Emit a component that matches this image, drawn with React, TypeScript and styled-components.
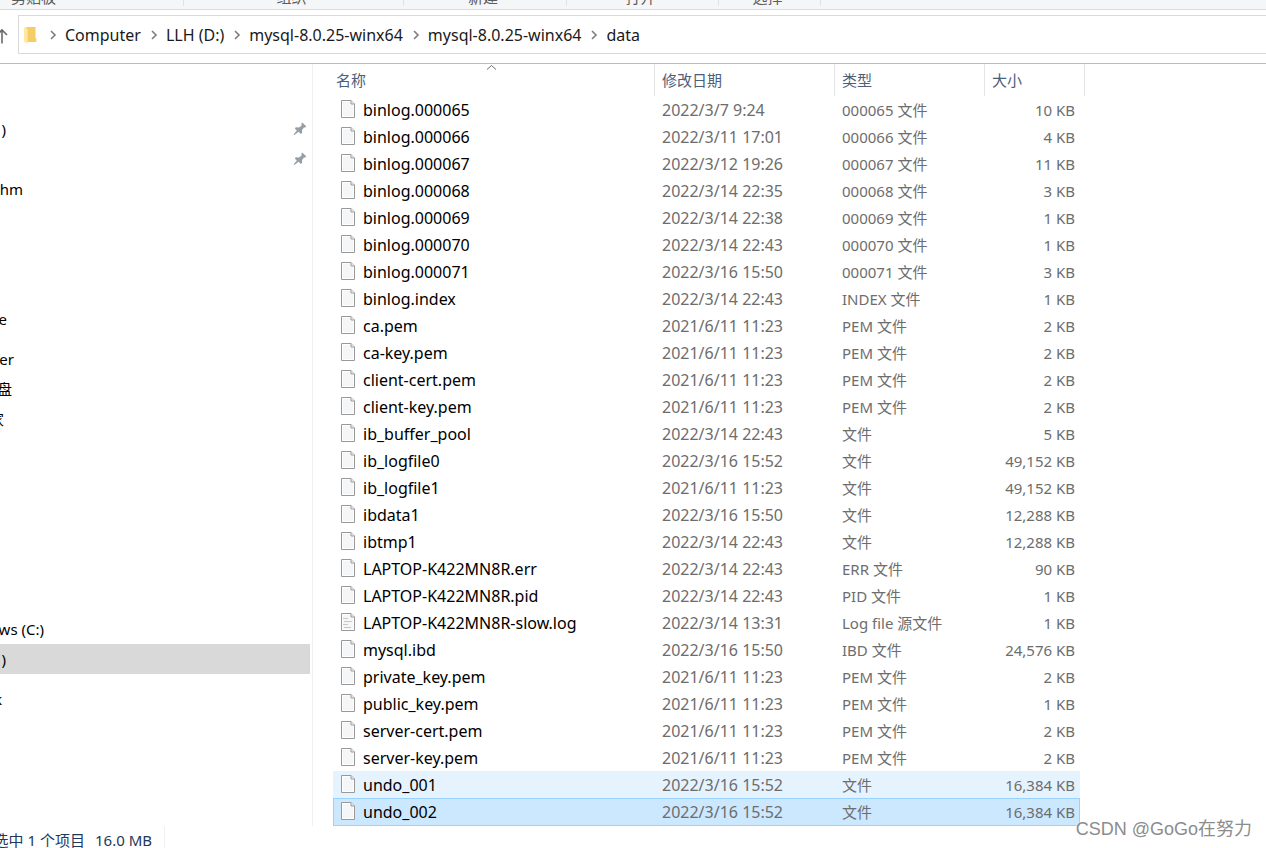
import React from "react";
import styled, { createGlobalStyle, css } from "styled-components";

const Global = createGlobalStyle`
  * { box-sizing: border-box; }
  body {
    margin: 0;
    background: #fff;
    color: #000;
    font-family: "Noto Sans", "Noto Sans CJK SC", sans-serif;
    font-size: 15px;
    line-height: 20px;
    overflow: hidden;
  }
  button { font: inherit; }
`;

const Window = styled.div`
  position: relative;
  display: flex;
  flex-direction: column;
  min-height: 100vh;
  overflow: hidden;
`;

const Ribbon = styled.div`
  display: flex;
  height: 10px;
  padding-bottom: 3px;
  background: #f5f6f7;
  border-bottom: 1px solid #dadbdc;
`;

const RibbonGroup = styled.div<{ $w: number; $padRight?: number }>`
  display: flex;
  flex: none;
  align-items: flex-end;
  justify-content: center;
  width: ${(p) => p.$w}px;
  padding-right: ${(p) => p.$padRight ?? 4}px;
  overflow: hidden;
  border-right: 1px solid #e2e3e4;
  color: #5a5d60;
  line-height: 18px;
`;

const AddressRow = styled.div`
  display: flex;
  height: 54px;
  padding: 5px 0 9px;
  border-bottom: 1px solid #bcbcbc;
`;

const UpButton = styled.button`
  display: flex;
  flex: none;
  align-items: center;
  width: 18px;
  padding: 3px 0 0;
  border: 0;
  background: none;
`;

const Crumbs = styled.nav`
  display: flex;
  flex: 1;
  align-items: center;
  padding-left: 5px;
  border: 1px solid #d9d9d9;
  border-right: 0;
`;

const Crumb = styled.a`
  color: #1a1a1a;
  font-size: 16px;
  text-decoration: none;
  white-space: nowrap;
`;

const ChevronSvg = styled.svg<{ $before: number }>`
  flex: none;
  margin: 0 8px 0 ${(p) => p.$before}px;
`;

const Body = styled.div`
  display: flex;
  flex: 1;
`;

const Sidebar = styled.aside`
  flex: none;
  width: 313px;
  padding-top: 50px;
  border-right: 1px solid #f0f0f0;
`;

const SideItem = styled.a<{ $gap?: number; $active?: boolean }>`
  display: flex;
  align-items: center;
  justify-content: space-between;
  height: 30px;
  margin-top: ${(p) => p.$gap ?? 0}px;
  margin-right: 2px;
  padding-right: 3px;
  overflow: hidden;
  background: ${(p) => (p.$active ? "#d9d9d9" : "transparent")};
  color: #000;
  text-decoration: none;
`;

const SideLabel = styled.span<{ $w: number }>`
  display: flex;
  justify-content: flex-end;
  width: ${(p) => p.$w}px;
  white-space: nowrap;
`;

const Files = styled.main`
  flex: 1;
  padding-left: 20px;
`;

const Table = styled.table`
  width: 747px;
  border-collapse: separate;
  border-spacing: 0;
  table-layout: fixed;
`;

const Th = styled.th<{ $w: number; $edge?: number }>`
  position: relative;
  width: ${(p) => p.$w}px;
  height: 32px;
  padding: 0 0 0 7px;
  color: #4c607a;
  font-weight: 400;
  text-align: left;

  &:first-child { padding-left: 3px; }
  &::after {
    content: "";
    position: absolute;
    top: 0;
    right: ${(p) => p.$edge ?? 0}px;
    bottom: 0;
    width: 1px;
    background: #e5e5e5;
  }
`;

const SortMark = styled.svg`
  position: absolute;
  top: 0;
  left: 50%;
  margin-left: -8px;
`;

const Row = styled.tr<{ $state?: "hover" | "selected" }>`
  td {
    height: 27px;
    padding: 0 0 0 7px;
    color: #6d6d6d;
    white-space: nowrap;
  }
  td:first-child { padding-left: 8px; }
  td:last-child {
    padding: 0 5px 0 0;
    text-align: right;
  }
  ${(p) => p.$state === "hover" && css`td { background: #e5f3ff; }`}
  ${(p) =>
    p.$state === "selected" &&
    css`
      td {
        height: 28px;
        background: #cce8ff;
        border: solid #99d1ff;
        border-width: 1px 0;
      }
      td:first-child { border-left-width: 1px; padding-left: 7px; }
      td:last-child { border-right-width: 1px; padding-right: 4px; }
    `}
`;

const FileName = styled.div`
  display: flex;
  align-items: center;
  gap: 8px;
  color: #000;
  font-size: 16px;

  svg { margin-bottom: 2px; }
`;

const Modified = styled.time`
  font-size: 16px;
`;

const StatusBar = styled.footer`
  display: flex;
  height: 22px;
  color: #1e395b;
`;

const StatusText = styled.div`
  display: flex;
  flex: none;
  justify-content: flex-end;
  gap: 10px;
  width: 165px;
  padding: 4px 12px 0 0;
  border-right: 1px solid #f0f0f0;
  white-space: nowrap;
`;

const Watermark = styled.div`
  position: absolute;
  right: 14px;
  bottom: 6px;
  color: #8c8c8c;
  font-family: "Liberation Sans", "Noto Sans CJK SC", sans-serif;
  font-size: 18px;
  line-height: 26px;
  text-shadow: 0 0 2px #fff;
`;

const Chevron = ({ before }: { before: number }) => (
  <ChevronSvg $before={before} width="7" height="10" viewBox="0 0 7 10">
    <path d="M1 1l4 4-4 4" fill="none" stroke="#7d7d7d" strokeWidth="1.6" />
  </ChevronSvg>
);

const Folder = () => (
  <svg width="13" height="18" viewBox="0 0 13 18">
    <path d="M2 1h9.500v11l.8.600v3.400H2z" fill="#f5cd67" />
    <path d="M0 1l3.600 2v14.500L0 15.800z" fill="#ffe9a2" />
  </svg>
);

const Pin = () => (
  <svg width="14" height="14" viewBox="0 0 14 14">
    <path
      d="M9.200.6l4 3.600-.8 1.200-1.400.2-2 2.400.2 2.800-1.400 1.200-2.200-2.200L1.400 13l-.8-.6L3.800 8.600 1.800 6.400l1-1.200 3.200.2 2.600-2-.2-1.600z"
      fill="#949fa8"
    />
  </svg>
);

const FileIcon = ({ lines }: { lines?: boolean }) => (
  <svg width="14" height="18" viewBox="0 0 14 18">
    <path d="M.5.5h9.500l3.500 3.500v13.500H.5z" fill="#fff" stroke="#999" />
    <path d="M2 2h7.500v3H12v11H2z" fill="#f5f6f7" />
    <path d="M10 .5V4h3.500" fill="#eee" stroke="#999" />
    {lines && <path d="M2 5.500h5M3 8.500h8M2 11.500h5M3 14.500h7" stroke="#c6c9cb" />}
  </svg>
);

const groups: { label: string; w: number; padRight?: number }[] = [
  { label: "剪贴板", w: 184, padRight: 116 },
  { label: "组织", w: 220 },
  { label: "新建", w: 163 },
  { label: "打开", w: 152 },
  { label: "选择", w: 102 },
];

const sideItems: { label: string; w: number; gap?: number; pin?: boolean; active?: boolean }[] = [
  { label: ")", w: 6, pin: true },
  { label: "", w: 0, pin: true },
  { label: "hm", w: 23 },
  { label: "OneDrive", w: 7, gap: 100 },
  { label: "Computer", w: 14, gap: 10 },
  { label: "网盘", w: 12 },
  { label: "家", w: 4 },
  { label: "Windows (C:)", w: 44, gap: 180 },
  { label: ")", w: 6, active: true },
  { label: "Network", w: 2, gap: 10 },
];

const files = [
  ["binlog.000065", "2022/3/7 9:24", "000065 文件", "10 KB"],
  ["binlog.000066", "2022/3/11 17:01", "000066 文件", "4 KB"],
  ["binlog.000067", "2022/3/12 19:26", "000067 文件", "11 KB"],
  ["binlog.000068", "2022/3/14 22:35", "000068 文件", "3 KB"],
  ["binlog.000069", "2022/3/14 22:38", "000069 文件", "1 KB"],
  ["binlog.000070", "2022/3/14 22:43", "000070 文件", "1 KB"],
  ["binlog.000071", "2022/3/16 15:50", "000071 文件", "3 KB"],
  ["binlog.index", "2022/3/14 22:43", "INDEX 文件", "1 KB"],
  ["ca.pem", "2021/6/11 11:23", "PEM 文件", "2 KB"],
  ["ca-key.pem", "2021/6/11 11:23", "PEM 文件", "2 KB"],
  ["client-cert.pem", "2021/6/11 11:23", "PEM 文件", "2 KB"],
  ["client-key.pem", "2021/6/11 11:23", "PEM 文件", "2 KB"],
  ["ib_buffer_pool", "2022/3/14 22:43", "文件", "5 KB"],
  ["ib_logfile0", "2022/3/16 15:52", "文件", "49,152 KB"],
  ["ib_logfile1", "2021/6/11 11:23", "文件", "49,152 KB"],
  ["ibdata1", "2022/3/16 15:50", "文件", "12,288 KB"],
  ["ibtmp1", "2022/3/14 22:43", "文件", "12,288 KB"],
  ["LAPTOP-K422MN8R.err", "2022/3/14 22:43", "ERR 文件", "90 KB"],
  ["LAPTOP-K422MN8R.pid", "2022/3/14 22:43", "PID 文件", "1 KB"],
  ["LAPTOP-K422MN8R-slow.log", "2022/3/14 13:31", "Log file 源文件", "1 KB"],
  ["mysql.ibd", "2022/3/16 15:50", "IBD 文件", "24,576 KB"],
  ["private_key.pem", "2021/6/11 11:23", "PEM 文件", "2 KB"],
  ["public_key.pem", "2021/6/11 11:23", "PEM 文件", "1 KB"],
  ["server-cert.pem", "2021/6/11 11:23", "PEM 文件", "2 KB"],
  ["server-key.pem", "2021/6/11 11:23", "PEM 文件", "2 KB"],
  ["undo_001", "2022/3/16 15:52", "文件", "16,384 KB"],
  ["undo_002", "2022/3/16 15:52", "文件", "16,384 KB"],
];

const rowStates: Record<string, "hover" | "selected"> = {
  undo_001: "hover",
  undo_002: "selected",
};

const crumbs = ["Computer", "LLH (D:)", "mysql-8.0.25-winx64", "mysql-8.0.25-winx64", "data"];

export default function App() {
  return (
    <Window>
      <Global />
      <Ribbon>
        {groups.map((g) => (
          <RibbonGroup key={g.label} $w={g.w} $padRight={g.padRight}>
            {g.label}
          </RibbonGroup>
        ))}
      </Ribbon>
      <AddressRow>
        <UpButton aria-label="Up">
          <svg width="9" height="16" viewBox="0 0 9 16">
            <path d="M2 15.500V2M-3 7l5-5 5 5" fill="none" stroke="#6b6b6b" strokeWidth="1.600" />
          </svg>
        </UpButton>
        <Crumbs>
          <Folder />
          {crumbs.map((c, i) => (
            <React.Fragment key={i}>
              <Chevron before={i ? 10 : 13} />
              <Crumb href="#">{c}</Crumb>
            </React.Fragment>
          ))}
        </Crumbs>
      </AddressRow>
      <Body>
        <Sidebar>
          {sideItems.map((s, i) => (
            <SideItem key={i} href="#" $gap={s.gap} $active={s.active}>
              <SideLabel $w={s.w}>{s.label}</SideLabel>
              {s.pin && <Pin />}
            </SideItem>
          ))}
        </Sidebar>
        <Files>
          <Table>
            <thead>
              <tr>
                <Th $w={322}>
                  名称
                  <SortMark width="11" height="7" viewBox="0 0 11 7">
                    <path d="M1 5.500l4.500-4 4.500 4" fill="none" stroke="#6d6d6d" />
                  </SortMark>
                </Th>
                <Th $w={180}>修改日期</Th>
                <Th $w={150}>类型</Th>
                <Th $w={95} $edge={-5}>大小</Th>
              </tr>
            </thead>
            <tbody>
              {files.map(([name, date, type, size]) => (
                <Row key={name} $state={rowStates[name]}>
                  <td>
                    <FileName>
                      <FileIcon lines={name.endsWith(".log")} />
                      {name}
                    </FileName>
                  </td>
                  <td>
                    <Modified>{date}</Modified>
                  </td>
                  <td>{type}</td>
                  <td>{size}</td>
                </Row>
              ))}
            </tbody>
          </Table>
        </Files>
      </Body>
      <StatusBar>
        <StatusText>
          <span>选中 1 个项目</span>
          <span>16.0 MB</span>
        </StatusText>
      </StatusBar>
      <Watermark>CSDN @GoGo在努力</Watermark>
    </Window>
  );
}
